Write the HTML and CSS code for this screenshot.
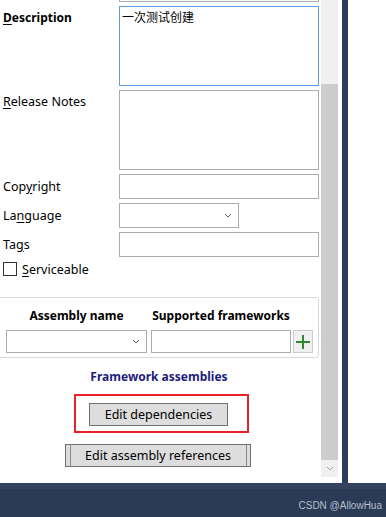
FILE: index.html
```html
<!DOCTYPE html>
<html lang="en">
<head>
    <meta charset="UTF-8">
    <title>Package metadata</title>
    <link rel="stylesheet" href="styles.css">
</head>
<body>
    <div id="screen">
        <div id="window">
            <div id="panel">
                <div id="content">
                    <div class="clip-field"></div>
                    <div class="form">
                        <div class="row row-tall">
                            <label class="label bold"><u>D</u>escription</label>
                            <div class="field area focus">一次测试创建</div>
                        </div>
                        <div class="row row-tall">
                            <label class="label"><u>R</u>elease Notes</label>
                            <div class="field area"></div>
                        </div>
                        <div class="row">
                            <label class="label">Cop<u>y</u>right</label>
                            <div class="field"></div>
                        </div>
                        <div class="row">
                            <label class="label">La<u>n</u>guage</label>
                            <div class="field combo short">
                                <svg class="chevron" width="8" height="5" viewBox="0 0 8 5"><path d="M1 1l3 3 3-3" fill="none" stroke="#606060" stroke-width="1"/></svg>
                            </div>
                        </div>
                        <div class="row">
                            <label class="label">Ta<u>g</u>s</label>
                            <div class="field"></div>
                        </div>
                        <div class="check-row">
                            <span class="checkbox"></span>
                            <span><u>S</u>erviceable</span>
                        </div>
                    </div>

                    <!-- Framework assemblies group -->
                    <div class="group">
                        <div class="group-head">Assembly name</div>
                        <div class="group-head">Supported frameworks</div>
                        <div></div>
                        <div class="field combo slim">
                            <svg class="chevron" width="8" height="5" viewBox="0 0 8 5"><path d="M1 1l3 3 3-3" fill="none" stroke="#606060" stroke-width="1"/></svg>
                        </div>
                        <div class="field slim"></div>
                        <button class="add-btn">
                            <svg width="14" height="14" viewBox="0 0 14 14"><path d="M7 0v14M0 7h14" stroke="#2f8a2f" stroke-width="2"/></svg>
                        </button>
                    </div>
                    <div class="group-title">Framework assemblies</div>

                    <div class="highlight">
                        <button class="btn">Edit dependencies</button>
                    </div>
                    <button class="btn btn-split">Edit assembly references</button>
                </div>
                <div id="scrollbar">
                    <div class="track"></div>
                    <div class="thumb"></div>
                    <div class="arrow">
                        <svg width="8" height="5" viewBox="0 0 8 5"><path d="M1 1l3 3 3-3" fill="none" stroke="#a6a6a6" stroke-width="1"/></svg>
                    </div>
                </div>
            </div>
            <div id="stripe"></div>
            <div id="side"></div>
        </div>
        <div id="footer">CSDN @AllowHua</div>
    </div>
</body>
</html>
```

FILE: styles.css
```css
* {
    margin: 0;
    padding: 0;
    box-sizing: border-box;
}
body {
    font-family: 'Noto Sans', 'Noto Sans CJK SC', sans-serif;
    font-size: 12.5px;
    color: #000000;
    background-color: #ffffff;
    width: 386px;
    height: 517px;
    overflow: hidden;
}
u {
    text-underline-offset: 2px;
}
#screen {
    display: flex;
    flex-direction: column;
    height: 517px;
}
#window {
    display: flex;
    height: 483px;
}
#panel {
    display: flex;
    width: 342px;
    background-color: #ffffff;
}
#content {
    width: 321px;
    display: flex;
    flex-direction: column;
}
/* Form rows */
.clip-field {
    margin-left: 119px;
    width: 200px;
    height: 2px;
    border: 1px solid #acacac;
    border-top: none;
}
.form {
    display: flex;
    flex-direction: column;
    gap: 4px;
    margin-top: 4px;
}
.row {
    display: flex;
    align-items: center;
    height: 25px;
}
.row-tall {
    align-items: flex-start;
    height: 80px;
}
.label {
    width: 119px;
    padding-left: 3px;
    line-height: 16px;
}
.row-tall .label {
    padding-top: 4px;
}
.bold {
    font-weight: bold;
    font-size: 12px;
}
.field {
    width: 200px;
    height: 25px;
    border: 1px solid #acacac;
    background-color: #ffffff;
    position: relative;
}
.area {
    height: 80px;
    padding: 2px 2px;
    line-height: 16px;
    font-size: 12px;
    font-family: 'Noto Sans CJK SC', sans-serif;
}
.focus {
    border-color: #5a9de0;
}
.short {
    width: 120px;
}
.slim {
    width: auto;
    height: 23px;
}
.chevron {
    position: absolute;
    right: 6px;
    top: 50%;
    margin-top: -3px;
}
.check-row {
    display: flex;
    align-items: center;
    gap: 5px;
    height: 14px;
    margin-top: 1px;
    padding-left: 3px;
}
.checkbox {
    width: 14px;
    height: 14px;
    border: 1px solid #333333;
}
/* Group box */
.group {
    display: grid;
    grid-template-columns: 141px 140px 20px;
    grid-template-rows: 16px 23px;
    column-gap: 4px;
    row-gap: 6px;
    width: 319px;
    margin-top: 21px;
    padding: 10px 5px 4px 6px;
    border: 1px solid #d6dbe0;
    border-left: none;
    border-radius: 0 3px 3px 0;
}
.group-head {
    font-weight: bold;
    font-size: 12px;
    text-align: center;
    line-height: 16px;
}
.add-btn {
    margin-left: -2px;
    width: 20px;
    height: 23px;
    border: 1px solid #cccccc;
    background-color: #f0f0f0;
    display: flex;
    align-items: center;
    justify-content: center;
}
.group-title {
    margin-top: 11px;
    width: 318px;
    text-align: center;
    font-weight: bold;
    font-size: 12px;
    line-height: 16px;
    color: #1c1c7c;
}
/* Buttons */
.highlight {
    margin: 9px 0 0 74px;
    width: 175px;
    height: 39px;
    border: 2px solid #e8202a;
    padding: 7px 0 0 13px;
}
.btn {
    display: block;
    height: 23px;
    width: 139px;
    border: 1px solid #707070;
    background-color: #dddddd;
    font-family: inherit;
    font-size: 12.5px;
    color: #000000;
}
.btn-split {
    width: 186px;
    margin: 11px 0 0 65px;
    background: linear-gradient(to right,
        transparent 4px, #8a8a8a 4px, #8a8a8a 5px, transparent 5px,
        transparent calc(100% - 4px), #8a8a8a calc(100% - 4px), #8a8a8a calc(100% - 3px), transparent calc(100% - 3px)),
        #dddddd;
}
/* Scrollbar */
#scrollbar {
    width: 17px;
    display: flex;
    flex-direction: column;
}
.track {
    height: 84px;
    background-color: #f0f0f0;
}
.thumb {
    height: 376px;
    background-color: #cdcdcd;
}
.arrow {
    height: 17px;
    background-color: #f0f0f0;
    display: flex;
    align-items: center;
    justify-content: center;
}
#stripe {
    width: 6px;
    background-color: #2e3d5b;
}
#side {
    flex: 1;
    background-color: #ffffff;
}
#footer {
    flex: 1;
    background: linear-gradient(#34435f 0 6px, #2b3a55 6px);
    color: #b7bfcc;
    font-family: 'Liberation Sans', Arial, sans-serif;
    font-size: 10px;
    text-align: right;
    padding: 17px 4px 0 0;
}
```
